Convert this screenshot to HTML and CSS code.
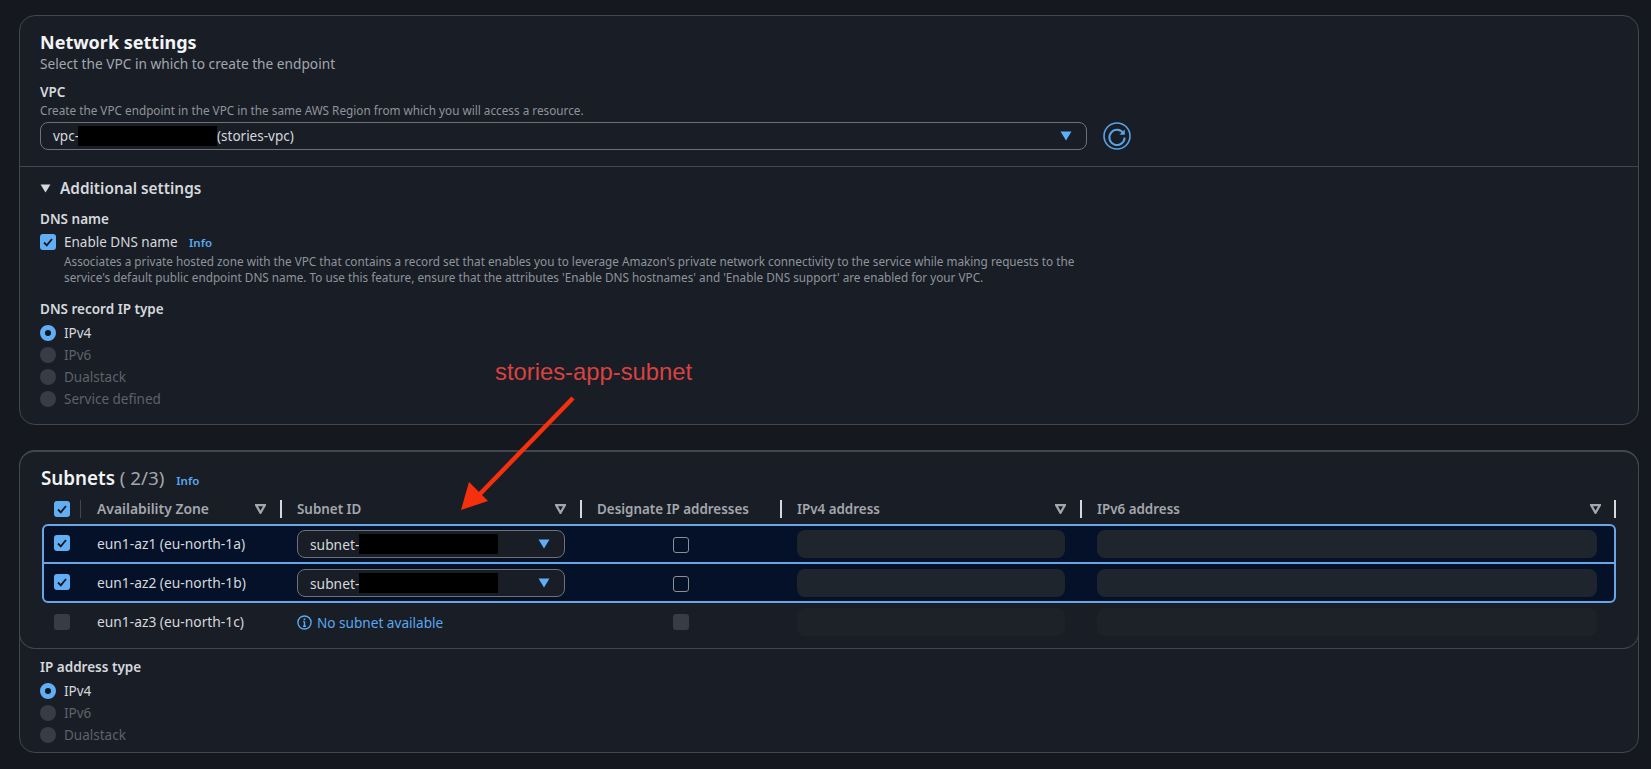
FILE: index.html
```html
<!DOCTYPE html>
<html lang="en">
<head>
<meta charset="utf-8">
<title>Network settings</title>
<link rel="stylesheet" href="styles.css">
</head>
<body>
<main class="page">
  <section class="panel network">
    <div class="vpc-section">
      <h2 class="title">Network settings</h2>
      <p class="subtitle">Select the VPC in which to create the endpoint</p>
      <div class="label vpc-label">VPC</div>
      <p class="hint vpc-hint">Create the VPC endpoint in the VPC in the same AWS Region from which you will access a resource.</p>
      <div class="vpc-row">
        <div class="select vpc-select">
          <span class="select-value">vpc-<span class="redact"></span>(stories-vpc)</span>
          <svg class="caret" viewBox="0 0 12 10"><path d="M0.5 0.5h11L6 9.5z"/></svg>
        </div>
        <svg class="refresh" viewBox="0 0 28 28">
          <circle class="refresh-ring" cx="14" cy="14" r="13"/>
          <path class="refresh-arrow" d="M20.5 11.5A7.6 7.6 0 1 0 21.6 15.5"/>
          <path class="refresh-head" d="M21.8 7.4v5.4h-5.4z"/>
        </svg>
      </div>
    </div>
    <div class="additional">
      <div class="expander"><svg class="expander-icon" viewBox="0 0 12 10"><path d="M0.5 0.5h11L6 9.5z"/></svg>Additional settings</div>
      <div class="label dns-label">DNS name</div>
      <div class="check-row">
        <span class="box checked"><svg viewBox="0 0 16 16"><path d="M4 8.5l2.8 2.8L12 5"/></svg></span>
        <div class="check-body">
          <div class="check-title">Enable DNS name <a class="info">Info</a></div>
          <p class="hint">Associates a private hosted zone with the VPC that contains a record set that enables you to leverage Amazon's private network connectivity to the service while making requests to the<br>service's default public endpoint DNS name. To use this feature, ensure that the attributes 'Enable DNS hostnames' and 'Enable DNS support' are enabled for your VPC.</p>
        </div>
      </div>
      <div class="label record-label">DNS record IP type</div>
      <div class="radios">
        <div class="radio-row"><span class="radio on"></span>IPv4</div>
        <div class="radio-row off"><span class="radio"></span>IPv6</div>
        <div class="radio-row off"><span class="radio"></span>Dualstack</div>
        <div class="radio-row off"><span class="radio"></span>Service defined</div>
      </div>
    </div>
  </section>

  <section class="panel subnets-panel">
    <div class="subnets">
      <h2 class="subnets-title">Subnets <span class="count">( 2/3)</span> <a class="info">Info</a></h2>
      <div class="grid header">
        <div class="col-check"><span class="box checked"><svg viewBox="0 0 16 16"><path d="M4 8.5l2.8 2.8L12 5"/></svg></span><i class="thin"></i></div>
        <div class="th first">Availability Zone<svg class="filter" viewBox="0 0 10 9"><path d="M1 1h8L5 8z"/></svg></div>
        <div class="th">Subnet ID<svg class="filter" viewBox="0 0 10 9"><path d="M1 1h8L5 8z"/></svg></div>
        <div class="th">Designate IP addresses</div>
        <div class="th">IPv4 address<svg class="filter" viewBox="0 0 10 9"><path d="M1 1h8L5 8z"/></svg></div>
        <div class="th last">IPv6 address<svg class="filter" viewBox="0 0 10 9"><path d="M1 1h8L5 8z"/></svg></div>
      </div>
      <div class="selected">
        <div class="grid row">
          <div class="col-check"><span class="box checked"><svg viewBox="0 0 16 16"><path d="M4 8.5l2.8 2.8L12 5"/></svg></span></div>
          <div class="td first">eun1-az1 (eu-north-1a)</div>
          <div class="td"><div class="select subnet-select"><span class="select-value">subnet-<span class="redact"></span></span><svg class="caret" viewBox="0 0 12 10"><path d="M0.5 0.5h11L6 9.5z"/></svg></div></div>
          <div class="td center"><span class="box empty"></span></div>
          <div class="td"><div class="field v4"></div></div>
          <div class="td"><div class="field v6"></div></div>
        </div>
        <div class="grid row second">
          <div class="col-check"><span class="box checked"><svg viewBox="0 0 16 16"><path d="M4 8.5l2.8 2.8L12 5"/></svg></span></div>
          <div class="td first">eun1-az2 (eu-north-1b)</div>
          <div class="td"><div class="select subnet-select"><span class="select-value">subnet-<span class="redact"></span></span><svg class="caret" viewBox="0 0 12 10"><path d="M0.5 0.5h11L6 9.5z"/></svg></div></div>
          <div class="td center"><span class="box empty"></span></div>
          <div class="td"><div class="field v4"></div></div>
          <div class="td"><div class="field v6"></div></div>
        </div>
      </div>
      <div class="grid row third">
        <div class="col-check"><span class="box disabled"></span></div>
        <div class="td first">eun1-az3 (eu-north-1c)</div>
        <div class="td"><span class="no-subnet"><svg class="info-icon" viewBox="0 0 16 16"><circle cx="8" cy="8" r="7"/><path d="M8 7v5M6.4 12h3.2M6.6 7H8"/><path class="dot" d="M7.1 3.6h1.8v1.8H7.1z"/></svg>No subnet available</span></div>
        <div class="td center"><span class="box disabled"></span></div>
        <div class="td"><div class="field v4 dim"></div></div>
        <div class="td"><div class="field v6 dim"></div></div>
      </div>
    </div>
    <div class="ip-type">
      <div class="label">IP address type</div>
      <div class="radios">
        <div class="radio-row"><span class="radio on"></span>IPv4</div>
        <div class="radio-row off"><span class="radio"></span>IPv6</div>
        <div class="radio-row off"><span class="radio"></span>Dualstack</div>
      </div>
    </div>
  </section>
</main>
<div class="callout">stories-app-subnet</div>
<svg class="callout-arrow" viewBox="0 0 1651 769">
  <path class="arrow-shaft" d="M573 398L478 496"/>
  <path class="arrow-head" d="M461 510L469 482L488 501z"/>
</svg>
</body>
</html>
```
FILE: styles.css
```css
* { box-sizing: border-box; }
html, body { margin: 0; height: 769px; overflow: hidden; }
body {
  background: #15191f;
  color: #d5d8dc;
  font-family: "Noto Sans", "Open Sans", sans-serif;
  font-size: 13.5px;
  position: relative;
}
.page { padding: 15px 12px 0 19px; width: 1651px; }
h2, p { margin: 0; }

.panel {
  border: 1px solid #42474e;
  border-radius: 16px;
  background: #191d26;
}
.network { height: 410px; }
.vpc-section { padding: 15px 20px 16px; border-bottom: 1px solid #42474e; }
.title { font-size: 18px; line-height: 22px; font-weight: 700; color: #f2f3f4; }
.subtitle { margin-top: 1px; font-size: 13.7px; line-height: 20px; color: #a3a7ad; }
.label { font-size: 13.5px; line-height: 18px; font-weight: 600; color: #d5d8dc; }
.vpc-label { margin-top: 9px; }
.hint { font-size: 11.75px; line-height: 16px; color: #8f949b; }
.vpc-hint { margin-top: 1px; }
.vpc-row { display: flex; align-items: center; gap: 16px; margin-top: 4px; }

.select {
  display: flex;
  align-items: center;
  justify-content: space-between;
  height: 28px;
  border: 1px solid #6d7178;
  border-radius: 8px;
  background: #191d26;
  padding: 0 14px 0 12px;
  color: #d5d8dc;
}
.vpc-select { width: 1047px; }
.select-value { display: flex; align-items: center; font-size: 13.5px; }
.redact { display: inline-block; width: 139px; height: 20px; margin-left: -1px; background: #000; }
.subnet-select .select-value { font-size: 13.8px; }
.subnet-select .redact { margin-left: 0; }
.caret { width: 12px; height: 10px; fill: #5eaef5; }
.refresh { width: 28px; height: 28px; fill: none; }
.refresh-ring { stroke: #5aa3e6; stroke-width: 1.6; }
.refresh-arrow { stroke: #5aa3e6; stroke-width: 2; }
.refresh-head { fill: #5aa3e6; }

.additional { padding: 10px 20px 0; }
.expander { display: flex; align-items: center; gap: 9px; font-size: 15.35px; line-height: 22px; font-weight: 600; color: #d5d8dc; }
.expander-icon { width: 11px; height: 9px; fill: #d5d8dc; }
.dns-label { margin-top: 11px; }
.check-row { display: flex; gap: 8px; margin-top: 5px; }
.check-title { line-height: 18px; font-size: 13.5px; }
.check-body .hint { margin-top: 1px; }
.info { color: #5aa8ee; font-size: 11.5px; font-weight: 600; margin-left: 8px; }

.box {
  display: flex;
  flex: none;
  width: 16px;
  height: 16px;
  border-radius: 3px;
  margin-top: 1px;
}
.box svg { width: 16px; height: 16px; fill: none; stroke: #12161d; stroke-width: 1.8; }
.checked { background: #62aef5; }
.empty { border: 1px solid #8b9096; margin: 2px 0 0; }
.disabled { background: #383c44; margin: 0; }

.record-label { margin-top: 15px; }
.radios { margin-top: 4px; }
.radio-row { display: flex; align-items: center; gap: 8px; height: 22px; font-size: 13.5px; }
.radio { width: 16px; height: 16px; border-radius: 50%; background: #383c44; }
.radio.on { background: #12161d; border: 5px solid #62aef5; }
.off { color: #5e6269; }

.subnets-panel { height: 303px; margin-top: 25px; }
.subnets {
  height: 199px;
  margin: -1px -1px 0;
  padding: 14px 22px 0;
  border: 1px solid #42474e;
  border-top-width: 2px;
  border-radius: 16px;
}
.subnets-title { font-size: 18.8px; line-height: 24px; font-weight: 600; color: #f2f3f4; margin-left: -1px; }
.count { font-weight: 400; color: #a3a7ad; }
.subnets-title .info { margin-left: 7px; }

.grid { display: grid; grid-template-columns: 55px 183px 300px 200px 300px 1fr; }
.header { height: 24px; margin-top: 7px; padding-bottom: 6px; }
.col-check { display: flex; align-items: center; padding-left: 12px; }
.col-check .box { margin: 0; }
.selected .col-check { margin-top: -2px; }
.thin { width: 1px; height: 18px; margin-left: 10px; background: #42474e; }
.th {
  display: flex;
  align-items: center;
  justify-content: space-between;
  padding: 0 14px 0 15px;
  border-left: 2px solid #d5d8dc;
  font-size: 13.4px;
  font-weight: 600;
  line-height: 18px;
  color: #a3a7ad;
}
.th.first { border-left: 0; padding-left: 0; padding-right: 14px; font-size: 13.9px; }
.th.last { border-right: 2px solid #d5d8dc; padding-right: 13px; }
.filter { width: 11px; height: 10px; fill: none; stroke: #a3a7ad; stroke-width: 2; }

.selected {
  border: 2px solid #6aa5e6;
  border-radius: 6px;
  background: #041129;
}
.row { height: 36px; align-items: center; }
.selected .row { margin: 0 -2px; }
.row.second { height: 39px; padding-top: 1px; border-top: 2px solid #6aa5e6; }
.row.third { height: 38px; }
.td { padding-left: 17px; font-size: 13.8px; }
.td.first { padding-left: 0; margin-top: -2px; }
.td.center { display: flex; justify-content: center; padding: 0 0 0 2px; }
.subnet-select { width: 268px; }
.field { height: 28px; border-radius: 8px; background: #1f252d; }
.field.v4 { width: 268px; }
.field.v6 { width: 500px; }
.field.dim { background: #1d2229; }
.no-subnet { display: flex; align-items: center; gap: 5px; color: #5aa8ee; font-size: 13.6px; }
.info-icon { width: 15px; height: 15px; fill: none; stroke: #5aa8ee; stroke-width: 1.5; }
.info-icon .dot { fill: #5aa8ee; stroke: none; }

.ip-type { padding: 9px 20px 0; }

.callout {
  position: absolute;
  left: 495px;
  top: 359px;
  font-family: "Liberation Sans", Arial, sans-serif;
  font-size: 23.8px;
  line-height: 26px;
  color: #d9423f;
}
.callout-arrow { position: absolute; left: 0; top: 0; width: 1651px; height: 769px; pointer-events: none; }
.arrow-shaft { stroke: #f5300c; stroke-width: 4.5; fill: none; }
.arrow-head { fill: #f5300c; }
```
